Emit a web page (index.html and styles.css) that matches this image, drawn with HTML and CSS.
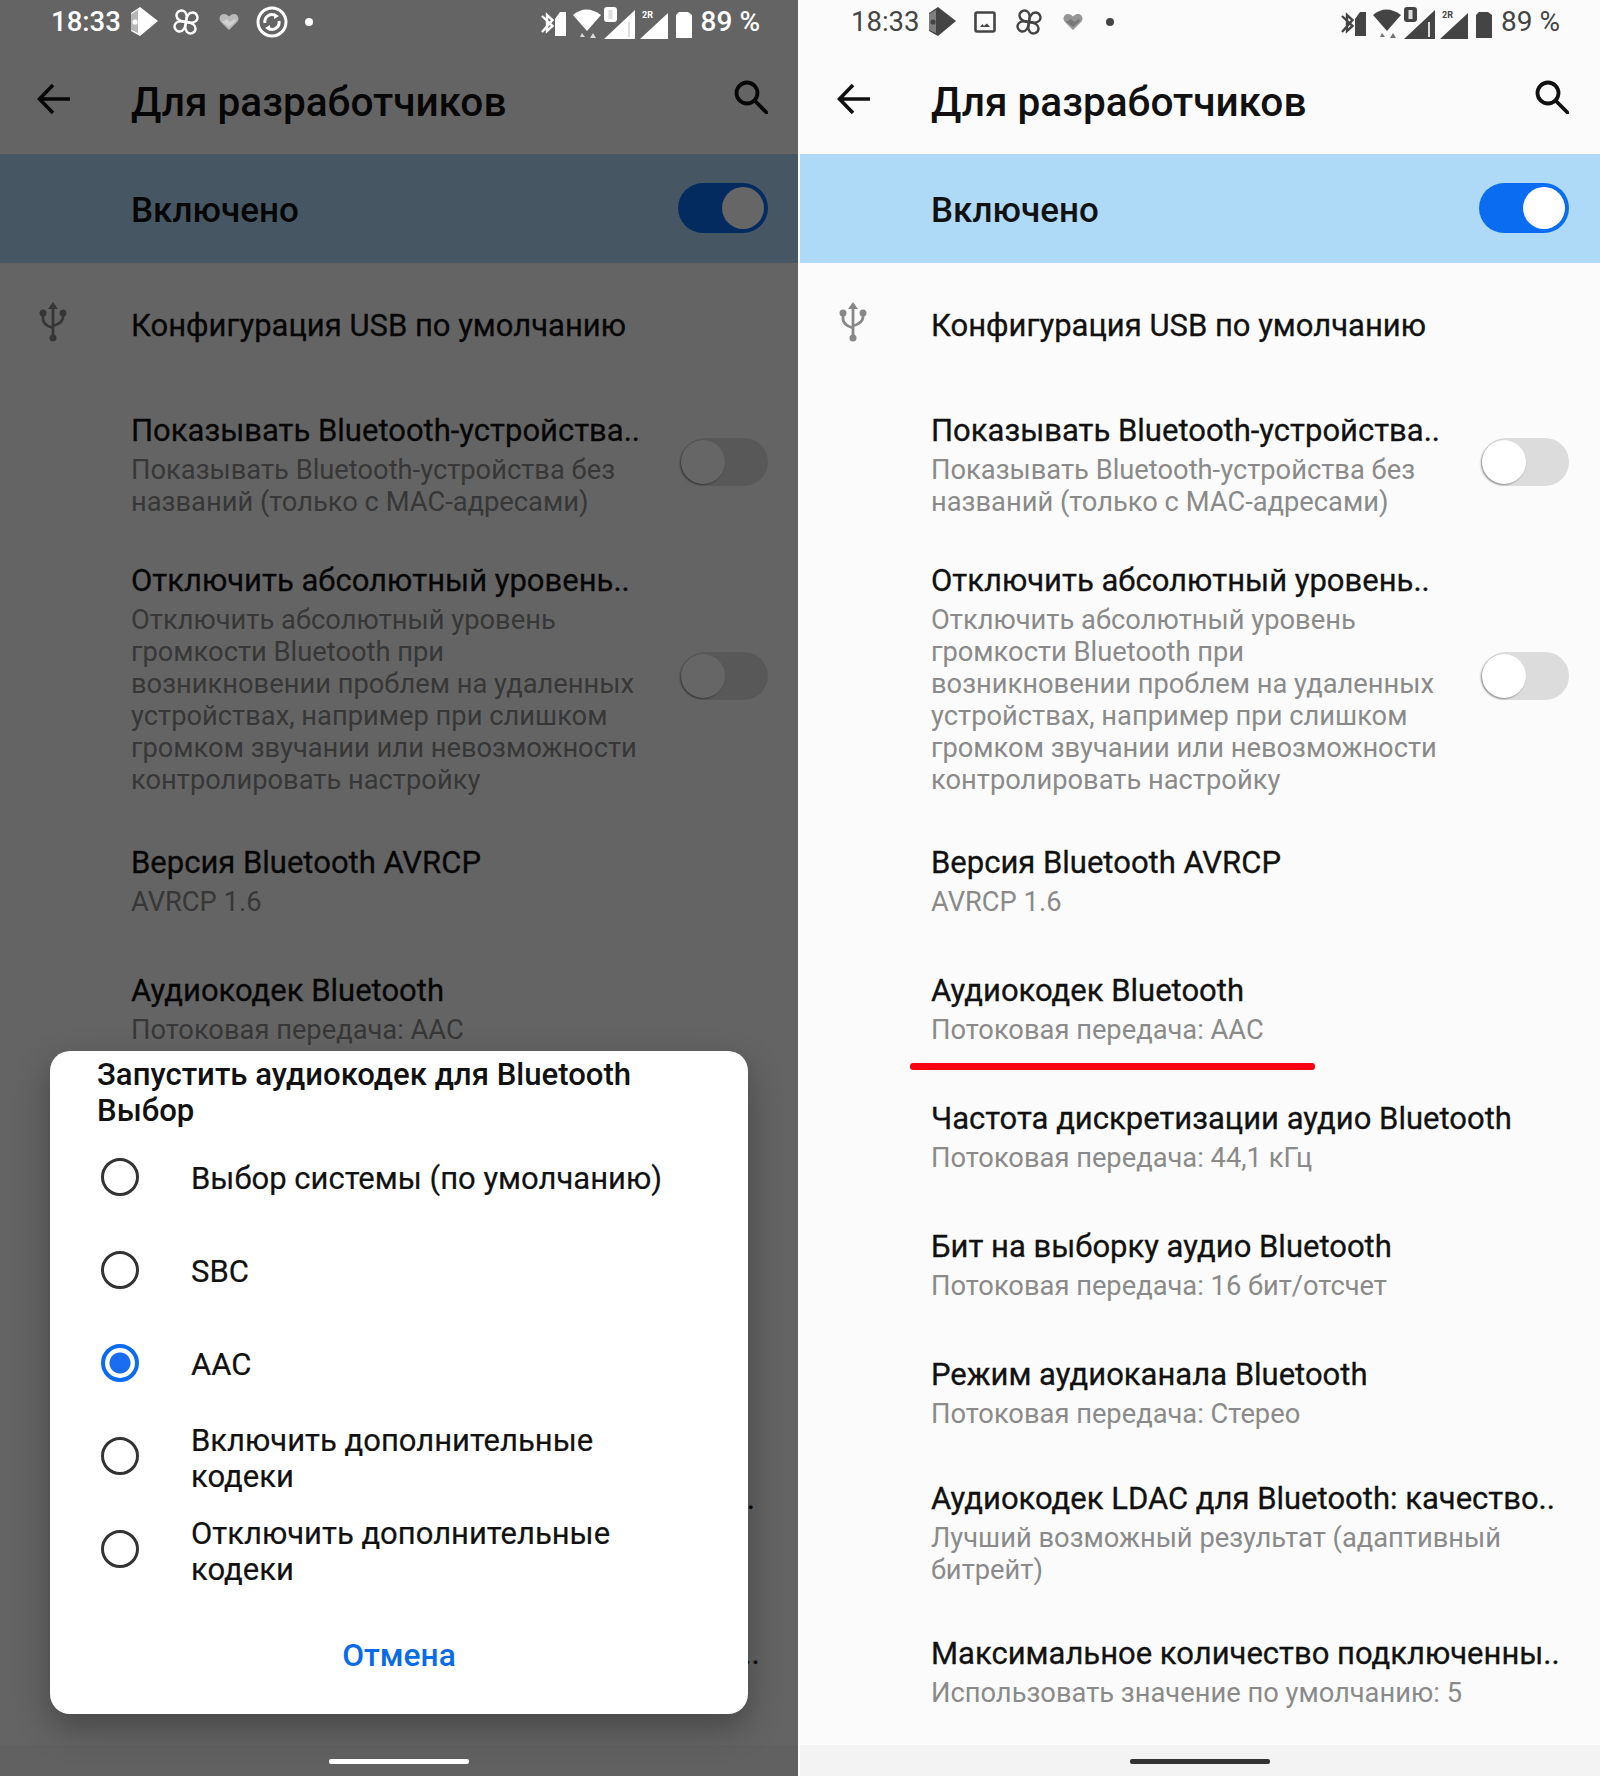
FILE: index.html
```html
<!DOCTYPE html>
<html lang="ru">
<head>
<meta charset="utf-8">
<title>Для разработчиков</title>
<link rel="stylesheet" href="styles.css">
</head>
<body>
<svg class="defs" width="0" height="0" aria-hidden="true">
  <symbol id="i-play" viewBox="0 0 30 30"><path d="M3 6 12 0 30 14 12 29 3 24Z" fill="currentColor"/><path d="M3 7 10 3V26L3 23Z" fill="#999" opacity=".7"/><circle cx="7" cy="15" r="2.6" fill="currentColor"/></symbol>
  <symbol id="i-flower" viewBox="0 0 26 26"><g fill="none" stroke="currentColor" stroke-width="2.400"><path d="M13 13C8 13 3 10 3.500 6 4 2 9 0 12 3 14 5 14 9 13 13Z"/><path d="M13 13C8 13 3 10 3.500 6 4 2 9 0 12 3 14 5 14 9 13 13Z" transform="rotate(90 13 13)"/><path d="M13 13C8 13 3 10 3.500 6 4 2 9 0 12 3 14 5 14 9 13 13Z" transform="rotate(180 13 13)"/><path d="M13 13C8 13 3 10 3.500 6 4 2 9 0 12 3 14 5 14 9 13 13Z" transform="rotate(270 13 13)"/></g></symbol>
  <symbol id="i-heart" viewBox="0 0 20 18"><path d="M10 17 1.500 8.500C-1 5 1.500 1 5 1 7.500 1 9 2.500 10 3.500 11 2.500 12.500 1 15 1 18.500 1 21 5 18.500 8.500Z" fill="currentColor" opacity=".55"/><path d="M3 9 8 6 11 9 16 6 17 8 10 14Z" fill="currentColor" opacity=".35"/></symbol>
  <symbol id="i-sync" viewBox="0 0 32 32"><circle cx="16" cy="16" r="14" fill="none" stroke="currentColor" stroke-width="3"/><path d="M9 17A7 7 0 0 1 20 10M23 15A7 7 0 0 1 12 22" fill="none" stroke="currentColor" stroke-width="3"/><path d="M18 7 23 10 18 13ZM14 19 9 22 14 25Z" fill="currentColor"/></symbol>
  <symbol id="i-img" viewBox="0 0 22 22"><rect x="1.500" y="1.500" width="19" height="19" rx="1.500" fill="none" stroke="currentColor" stroke-width="2.600"/><path d="M6 16 8.500 13 10 15 11 14 13 12.500 16 16Z" fill="currentColor"/></symbol>
  <symbol id="i-status" viewBox="0 0 152 32">
    <path d="M1 9 11.500 19 6 24V8L11.500 13 1 25" fill="none" stroke="currentColor" stroke-width="2.400"/>
    <path d="M14 12 19 5 25 5V29H14Z" fill="currentColor"/>
    <path d="M32 8Q45-3 60 8L46 24Z" fill="currentColor"/>
    <path d="M41 26 44 30H39ZM52 26 55 31H49Z" fill="currentColor" opacity=".75"/>
    <rect x="63" y="0" width="13" height="15" rx="3" fill="currentColor"/>
    <rect x="67.500" y="3" width="4" height="9" class="cut"/>
    <path d="M63 32 94 3V32Z" fill="currentColor"/>
    <rect x="87" y="15" width="2" height="15" class="cut"/>
    <path d="M99 32 127 6V32Z" fill="currentColor"/>
    <path d="M135 8 138 5H147L151 8V31H135Z" fill="currentColor"/>
  </symbol>
  <symbol id="i-back" viewBox="0 0 34 32"><path d="M33 16H3M16 2 2.500 16 16 30" fill="none" stroke="currentColor" stroke-width="3.600"/></symbol>
  <symbol id="i-search" viewBox="0 0 34 34"><circle cx="13" cy="13" r="10.500" fill="none" stroke="currentColor" stroke-width="3.800"/><path d="M21 21 32.500 32.500" fill="none" stroke="currentColor" stroke-width="3.800" stroke-linecap="round"/></symbol>
  <symbol id="i-usb" viewBox="0 0 28 40"><path d="M14 0 19 7H9Z" fill="currentColor"/><path d="M14 5V35M4 12V17Q4 23 14 26M24 12V15Q24 21 14 24" fill="none" stroke="currentColor" stroke-width="2.800"/><circle cx="14" cy="36" r="3.500" fill="currentColor"/><circle cx="4" cy="11" r="3.500" fill="currentColor"/><circle cx="24" cy="11" r="3.500" fill="currentColor"/></symbol>
</svg>

<div class="screens">
  <section class="phone phone-dim">
    <div class="status">
      <span class="clock">18:33</span>
      <svg class="si si-play"><use href="#i-play"/></svg>
      <svg class="si si-flower1"><use href="#i-flower"/></svg>
      <svg class="si si-heart1"><use href="#i-heart"/></svg>
      <svg class="si si-sync"><use href="#i-sync"/></svg>
      <span class="dot dot-dim"></span>
      <svg class="si si-right" viewBox="0 0 152 32"><use href="#i-status" width="152" height="32"/><text class="tiny" x="101" y="11">2R</text></svg>
      <span class="batt">89 %</span>
    </div>
    <header class="appbar">
      <svg class="back"><use href="#i-back"/></svg>
      <h1 class="apptitle">Для разработчиков</h1>
      <svg class="search"><use href="#i-search"/></svg>
    </header>
    <div class="band"><span class="bandtext">Включено</span><span class="toggle on"></span></div>
    <div class="usb"><svg class="usbicon"><use href="#i-usb"/></svg><span class="title">Конфигурация USB по умолчанию</span></div>
    <div class="row pb14"><div class="txt"><div class="title">Показывать Bluetooth-устройства..</div><div class="sub">Показывать Bluetooth-устройства без<br>названий (только с MAC-адресами)</div></div><span class="toggle"></span></div>
    <div class="row pb18"><div class="txt"><div class="title">Отключить абсолютный уровень..</div><div class="sub">Отключить абсолютный уровень<br>громкости Bluetooth при<br>возникновении проблем на удаленных<br>устройствах, например при слишком<br>громком звучании или невозможности<br>контролировать настройку</div></div><span class="toggle"></span></div>
    <div class="row"><div class="txt"><div class="title">Версия Bluetooth AVRCP</div><div class="sub">AVRCP 1.6</div></div></div>
    <div class="row"><div class="txt"><div class="title">Аудиокодек Bluetooth</div><div class="sub">Потоковая передача: AAC</div></div></div>
    <div class="row"><div class="txt"><div class="title">Частота дискретизации аудио Bluetooth</div><div class="sub">Потоковая передача: 44,1 кГц</div></div></div>
    <div class="row"><div class="txt"><div class="title">Бит на выборку аудио Bluetooth</div><div class="sub">Потоковая передача: 16 бит/отсчет</div></div></div>
    <div class="row pb20"><div class="txt"><div class="title">Режим аудиоканала Bluetooth</div><div class="sub">Потоковая передача: Стерео</div></div></div>
    <div class="row pb19"><div class="txt"><div class="title">Аудиокодек LDAC для Bluetooth: качество..</div><div class="sub">Лучший возможный результат (адаптивный<br>битрейт)</div></div></div>
    <div class="row"><div class="txt"><div class="title">Максимальное количество подключенны..</div><div class="sub">Использовать значение по умолчанию: 5</div></div></div>
    <div class="navbar"></div>
    <div class="scrim"></div>
    <div class="dialog">
      <h2 class="dtitle">Запустить аудиокодек для Bluetooth<br>Выбор</h2>
      <div class="opts">
        <div class="opt"><span class="radio"></span><span class="otext single">Выбор системы (по умолчанию)</span></div>
        <div class="opt"><span class="radio"></span><span class="otext single">SBC</span></div>
        <div class="opt"><span class="radio sel"></span><span class="otext single">AAC</span></div>
        <div class="opt"><span class="radio"></span><span class="otext">Включить дополнительные<br>кодеки</span></div>
        <div class="opt"><span class="radio"></span><span class="otext">Отключить дополнительные<br>кодеки</span></div>
      </div>
      <div class="cancel">Отмена</div>
    </div>
    <div class="pill"></div>
  </section>

  <section class="phone phone-light">
    <div class="status">
      <span class="clock">18:33</span>
      <svg class="si si-play"><use href="#i-play"/></svg>
      <svg class="si si-img"><use href="#i-img"/></svg>
      <svg class="si si-flower2"><use href="#i-flower"/></svg>
      <svg class="si si-heart2"><use href="#i-heart"/></svg>
      <span class="dot dot-light"></span>
      <svg class="si si-right" viewBox="0 0 152 32"><use href="#i-status" width="152" height="32"/><text class="tiny" x="101" y="11">2R</text></svg>
      <span class="batt">89 %</span>
    </div>
    <header class="appbar">
      <svg class="back"><use href="#i-back"/></svg>
      <h1 class="apptitle">Для разработчиков</h1>
      <svg class="search"><use href="#i-search"/></svg>
    </header>
    <div class="band"><span class="bandtext">Включено</span><span class="toggle on"></span></div>
    <div class="usb"><svg class="usbicon"><use href="#i-usb"/></svg><span class="title">Конфигурация USB по умолчанию</span></div>
    <div class="row pb14"><div class="txt"><div class="title">Показывать Bluetooth-устройства..</div><div class="sub">Показывать Bluetooth-устройства без<br>названий (только с MAC-адресами)</div></div><span class="toggle"></span></div>
    <div class="row pb18"><div class="txt"><div class="title">Отключить абсолютный уровень..</div><div class="sub">Отключить абсолютный уровень<br>громкости Bluetooth при<br>возникновении проблем на удаленных<br>устройствах, например при слишком<br>громком звучании или невозможности<br>контролировать настройку</div></div><span class="toggle"></span></div>
    <div class="row"><div class="txt"><div class="title">Версия Bluetooth AVRCP</div><div class="sub">AVRCP 1.6</div></div></div>
    <div class="row marked"><div class="txt"><div class="title">Аудиокодек Bluetooth</div><div class="sub">Потоковая передача: AAC</div></div><span class="redline"></span></div>
    <div class="row"><div class="txt"><div class="title">Частота дискретизации аудио Bluetooth</div><div class="sub">Потоковая передача: 44,1 кГц</div></div></div>
    <div class="row"><div class="txt"><div class="title">Бит на выборку аудио Bluetooth</div><div class="sub">Потоковая передача: 16 бит/отсчет</div></div></div>
    <div class="row pb20"><div class="txt"><div class="title">Режим аудиоканала Bluetooth</div><div class="sub">Потоковая передача: Стерео</div></div></div>
    <div class="row pb19"><div class="txt"><div class="title">Аудиокодек LDAC для Bluetooth: качество..</div><div class="sub">Лучший возможный результат (адаптивный<br>битрейт)</div></div></div>
    <div class="row"><div class="txt"><div class="title">Максимальное количество подключенны..</div><div class="sub">Использовать значение по умолчанию: 5</div></div></div>
    <div class="navbar"></div>
    <div class="pill"></div>
  </section>
</div>
</body>
</html>
```

FILE: styles.css
```css
* { box-sizing: border-box; }
html, body { margin: 0; padding: 0; }
body {
  width: 1600px;
  height: 1776px;
  overflow: hidden;
  background: #fdfdfd;
  font-family: Roboto, "Noto Sans", sans-serif;
}
.defs { position: absolute; }
.tiny { font: 700 9px Roboto, sans-serif; fill: currentColor; }
.phone-dim .cut { fill: #777; }
.cut { fill: #ddd; }

.screens {
  display: grid;
  grid-template-columns: 798px 800px;
  column-gap: 2px;
  height: 1776px;
}
.phone {
  --pr: 30px;
  position: relative;
  height: 1776px;
  overflow: hidden;
  background: #fbfbfb;
  color: #111;
  padding-bottom: 31px;
}
.phone-light { --pr: 31px; }
.phone-dim .status { color: #fff; }
.phone-light .status { color: #444; }

.status {
  position: relative;
  z-index: 2;
  display: flex;
  align-items: center;
  height: 44px;
  padding-left: 51px;
}
.clock, .batt { font-size: 27.500px; line-height: 44px; font-weight: 400; }
.batt { font-size: 28px; }
.phone-dim .clock, .phone-dim .batt { font-weight: 500; }
.si { display: block; flex: none; }
.si-play { width: 30px; height: 30px; margin-left: 7px; }
.si-flower1 { width: 26px; height: 26px; margin-left: 15px; }
.si-heart1 { width: 20px; height: 18px; margin-left: 20px; }
.si-sync { width: 32px; height: 32px; margin-left: 17px; }
.dot { width: 8px; height: 8px; border-radius: 50%; background: currentColor; flex: none; }
.dot-dim { margin-left: 17px; }
.si-img { width: 22px; height: 22px; margin-left: 18px; }
.si-flower2 { width: 26px; height: 26px; margin-left: 20px; }
.si-heart2 { width: 20px; height: 18px; margin-left: 21px; }
.dot-light { margin-left: 23px; }
.si-right { width: 152px; height: 32px; margin-left: auto; margin-top: 2px; }
.batt { margin-left: 8px; margin-right: 38px; white-space: nowrap; }
.phone-light .batt { margin-right: 40px; }

.appbar {
  display: flex;
  align-items: center;
  height: 110px;
  padding: 6px var(--pr) 0 37px;
}
.back { width: 34px; height: 32px; flex: none; margin-top: -6px; }
.apptitle { margin: 0 0 0 60px; font-size: 40.600px; font-weight: 500; line-height: 48px; flex: 1; white-space: nowrap; }
.search { width: 34px; height: 34px; flex: none; margin-top: -10px; }

.band {
  display: flex;
  align-items: center;
  justify-content: space-between;
  height: 109px;
  padding: 0 var(--pr) 0 131px;
  background: #aedaf8;
}
.bandtext { font-size: 35px; font-weight: 500; line-height: 48px; padding-top: 4px; }

.toggle {
  position: relative;
  display: block;
  flex: none;
  width: 87px;
  height: 48px;
  border-radius: 24px;
  background: #dcdcdc;
}
.toggle::after {
  content: "";
  position: absolute;
  left: 0;
  top: 2px;
  width: 44px;
  height: 44px;
  border-radius: 50%;
  background: #fff;
  box-shadow: -1px 1px 2px #888;
}
.toggle.on { width: 90px; height: 50px; border-radius: 25px; background: #0a6cf0; margin-top: -2px; }
.toggle.on::after { left: auto; right: 4px; top: 4px; width: 42px; height: 42px; box-shadow: none; }

.usb {
  display: flex;
  align-items: center;
  padding: 38px var(--pr) 33px 39px;
}
.usbicon { width: 28px; height: 40px; flex: none; color: #888; margin-right: 64px; margin-top: -6px; }

.row {
  position: relative;
  display: flex;
  align-items: center;
  justify-content: space-between;
  padding: 24px var(--pr) 24px 131px;
}
.pb14 { padding-bottom: 14px; }
.pb18 { padding-bottom: 18px; }
.pb19 { padding-bottom: 19px; }
.pb20 { padding-bottom: 20px; }
.title {
  display: block;
  padding-top: 1px;
  font-size: 31px;
  line-height: 47px;
  font-weight: 400;
  white-space: nowrap;
  color: #111;
  -webkit-text-stroke: .3px #111;
}
.sub { font-size: 27.300px; line-height: 32px; color: #8a8a8a; white-space: nowrap; }

.redline {
  position: absolute;
  left: 110px;
  bottom: 0;
  width: 405px;
  height: 7px;
  border-radius: 3px;
  background: #fb0012;
}

.navbar {
  position: absolute;
  left: 0;
  right: 0;
  bottom: 0;
  height: 31px;
  background: #f3f3f3;
}
.pill {
  position: absolute;
  z-index: 3;
  left: 50%;
  bottom: 12px;
  width: 140px;
  height: 5px;
  margin-left: -70px;
  border-radius: 2px;
}
.phone-dim .pill { background: #fff; }
.phone-light .pill { background: #333; }

.scrim {
  position: absolute;
  inset: 0;
  z-index: 1;
  background: rgba(0, 0, 0, .6);
}

.dialog {
  position: absolute;
  z-index: 2;
  left: 50px;
  top: 1051px;
  width: 698px;
  height: 663px;
  padding: 6px 47px 0;
  border-radius: 20px;
  background: #fff;
  box-shadow: 0 14px 34px rgba(0, 0, 0, .3);
}
.dtitle { margin: 0; font-size: 31.100px; line-height: 36px; font-weight: 500; color: #111; white-space: nowrap; }
.opts { margin: 2px 0 0 -47px; }
.opt { display: flex; align-items: center; height: 93px; padding-left: 51px; }
.radio {
  display: block;
  flex: none;
  width: 38px;
  height: 38px;
  margin-bottom: 2px;
  border: 3px solid #333;
  border-radius: 50%;
}
.radio.sel {
  border: 4px solid #0a6cf0;
  background: radial-gradient(circle, #1a6cf0 0 10px, #fff 11px);
}
.otext { margin: 4px 0 0 52px; font-size: 31px; line-height: 36px; color: #111; white-space: nowrap; -webkit-text-stroke: .2px #111; }
.otext.single { margin-top: 2px; }
.cancel {
  margin: 30px 0 0 -47px;
  width: 698px;
  text-align: center;
  font-size: 31.700px;
  line-height: 60px;
  font-weight: 500;
  color: #0a6be8;
}
```
